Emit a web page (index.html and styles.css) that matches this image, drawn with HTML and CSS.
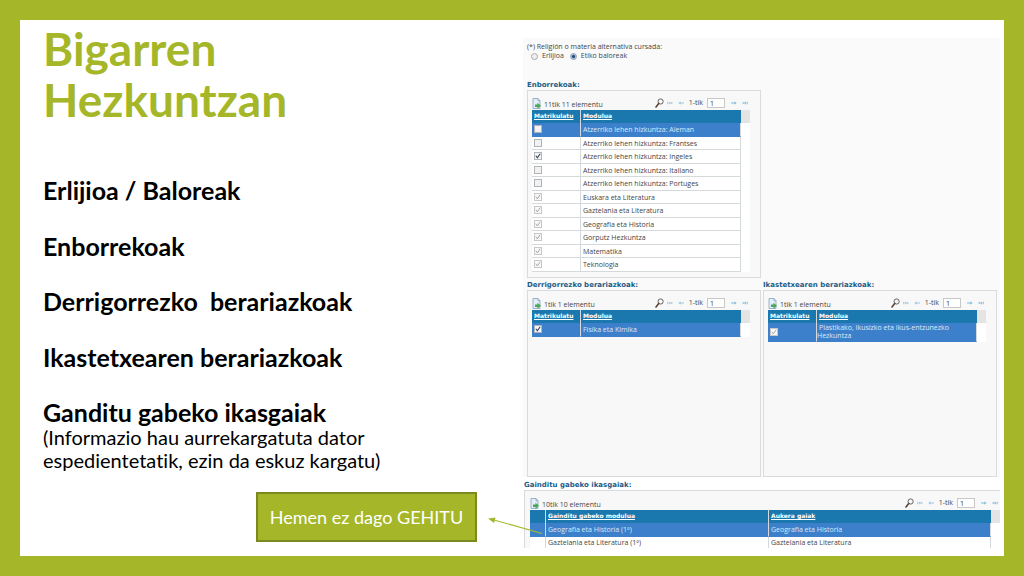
FILE: index.html
```
<!DOCTYPE html>
<html lang="eu">
<head>
    <meta charset="UTF-8">
    <meta name="viewport" content="width=device-width, initial-scale=1.0">
    <title>Bigarren Hezkuntzan</title>
    <link rel="stylesheet" href="styles.css">
</head>
<body>

<!-- shared icons -->
<svg class="sprite" aria-hidden="true">
    <symbol id="icon-export" viewBox="0 0 9 11">
        <path d="M1 .5h5l2 2.200v7.800H1z" fill="#e3eef8" stroke="#7da2c4" stroke-width=".8"/>
        <path d="M6 .5v2.300h2" fill="none" stroke="#7da2c4" stroke-width=".7"/>
        <path d="M3 6.500h2.500V4.800L9 7.700 5.500 10.700V9H3z" fill="#4fa556"/>
    </symbol>
    <symbol id="icon-search" viewBox="0 0 9 10">
        <circle cx="5.600" cy="3.500" r="2.600" fill="#f6f6f6" stroke="#555" stroke-width=".9"/>
        <path d="M3.700 5.500L1 9" stroke="#5b4636" stroke-width="1.600" stroke-linecap="round"/>
    </symbol>
    <symbol id="icon-first" viewBox="0 0 6 4">
        <path d="M.2.800h1v2.400h-1zM3.200.3v3.400L1.500 2zM3.500 1.200h2v1.600h-2z" fill="#a5cae0"/>
    </symbol>
    <symbol id="icon-prev" viewBox="0 0 6 4">
        <path d="M2.500.3v3.400L.3 2zM2.500 1.200h1.200v1.600H2.500zM4.200 1.200h1.500v1.600H4.200z" fill="#a5cae0"/>
    </symbol>
    <symbol id="icon-next" viewBox="0 0 6 4">
        <path d="M3.500.3v3.400L5.700 2zM2.300 1.200h1.200v1.600H2.300zM.3 1.200h1.500v1.600H.3z" fill="#8cc0dc"/>
    </symbol>
    <symbol id="icon-last" viewBox="0 0 6 4">
        <path d="M4.800.8h1v2.400h-1zM2.800.3v3.400L4.500 2zM.5 1.200h2v1.600h-2z" fill="#8cc0dc"/>
    </symbol>
</svg>

<main class="slide">
    <section class="summary">
        <h1>Bigarren Hezkuntzan</h1>
        <ul class="topics">
            <li>Erlijioa / Baloreak</li>
            <li>Enborrekoak</li>
            <li>Derrigorrezko&nbsp; berariazkoak</li>
            <li>Ikastetxearen berariazkoak</li>
            <li>Ganditu gabeko ikasgaiak</li>
        </ul>
        <p class="note">(Informazio hau aurrekargatuta dator espedientetatik, ezin da eskuz kargatu)</p>
        <div class="callout">
            Hemen ez dago GEHITU
            <svg class="arrow" viewBox="0 0 56 20" aria-hidden="true">
                <path d="M54 17.500L6 4" stroke="#a5b729" stroke-width="1.200"/>
                <path d="M0 2.500L7.500 1.500 6 7z" fill="#a5b729"/>
            </svg>
        </div>
    </section>

    <section class="app">
        <div class="app-top">
            <fieldset class="religion">
                <legend>(*) Religión o materia alternativa cursada:</legend>
                <label><input type="radio" name="religion">Erlijioa</label>
                <label><input type="radio" name="religion" checked>Etiko baloreak</label>
            </fieldset>

            <div class="panels">
                <div class="group">
                    <h2>Enborrekoak:</h2>
                    <div class="panel">
                        <div class="toolbar">
                            <svg class="export"><use href="#icon-export"/></svg>
                            <span class="count">11tik 11 elementu</span>
                            <svg class="search"><use href="#icon-search"/></svg>
                            <svg class="nav"><use href="#icon-first"/></svg>
                            <svg class="nav"><use href="#icon-prev"/></svg>
                            <label class="page">1-tik <input type="text" value="1"></label>
                            <svg class="nav"><use href="#icon-next"/></svg>
                            <svg class="nav"><use href="#icon-last"/></svg>
                        </div>
                        <div class="grid">
                            <table>
                                <thead>
                                    <tr><th class="check"><a href="#">Matrikulatu</a></th><th><a href="#">Modulua</a></th></tr>
                                </thead>
                                <tbody>
                                    <tr class="selected"><td><input type="checkbox" aria-label="Aleman"></td><td>Atzerriko lehen hizkuntza: Aleman</td></tr>
                                    <tr><td><input type="checkbox" aria-label="Frantses"></td><td>Atzerriko lehen hizkuntza: Frantses</td></tr>
                                    <tr><td><input type="checkbox" aria-label="Ingeles" checked></td><td>Atzerriko lehen hizkuntza: Ingeles</td></tr>
                                    <tr><td><input type="checkbox" aria-label="Italiano"></td><td>Atzerriko lehen hizkuntza: Italiano</td></tr>
                                    <tr><td><input type="checkbox" aria-label="Portuges"></td><td>Atzerriko lehen hizkuntza: Portuges</td></tr>
                                    <tr><td><input type="checkbox" aria-label="Euskara eta Literatura" checked disabled></td><td>Euskara eta Literatura</td></tr>
                                    <tr><td><input type="checkbox" aria-label="Gaztelania eta Literatura" checked disabled></td><td>Gaztelania eta Literatura</td></tr>
                                    <tr><td><input type="checkbox" aria-label="Geografia eta Historia" checked disabled></td><td>Geografia eta Historia</td></tr>
                                    <tr><td><input type="checkbox" aria-label="Gorputz Hezkuntza" checked disabled></td><td>Gorputz Hezkuntza</td></tr>
                                    <tr><td><input type="checkbox" aria-label="Matematika" checked disabled></td><td>Matematika</td></tr>
                                    <tr><td><input type="checkbox" aria-label="Teknologia" checked disabled></td><td>Teknologia</td></tr>
                                </tbody>
                            </table>
                        </div>
                    </div>
                </div>

                <div class="group second-row">
                    <h2>Derrigorrezko berariazkoak:</h2>
                    <div class="panel">
                        <div class="toolbar">
                            <svg class="export"><use href="#icon-export"/></svg>
                            <span class="count">1tik 1 elementu</span>
                            <svg class="search"><use href="#icon-search"/></svg>
                            <svg class="nav"><use href="#icon-first"/></svg>
                            <svg class="nav"><use href="#icon-prev"/></svg>
                            <label class="page">1-tik <input type="text" value="1"></label>
                            <svg class="nav"><use href="#icon-next"/></svg>
                            <svg class="nav"><use href="#icon-last"/></svg>
                        </div>
                        <div class="grid">
                            <table>
                                <thead>
                                    <tr><th class="check"><a href="#">Matrikulatu</a></th><th><a href="#">Modulua</a></th></tr>
                                </thead>
                                <tbody>
                                    <tr class="selected"><td><input type="checkbox" aria-label="Fisika eta Kimika" checked></td><td>Fisika eta Kimika</td></tr>
                                </tbody>
                            </table>
                        </div>
                    </div>
                </div>

                <div class="group second-row">
                    <h2>Ikastetxearen berariazkoak:</h2>
                    <div class="panel">
                        <div class="toolbar">
                            <svg class="export"><use href="#icon-export"/></svg>
                            <span class="count">1tik 1 elementu</span>
                            <svg class="search"><use href="#icon-search"/></svg>
                            <svg class="nav"><use href="#icon-first"/></svg>
                            <svg class="nav"><use href="#icon-prev"/></svg>
                            <label class="page">1-tik <input type="text" value="1"></label>
                            <svg class="nav"><use href="#icon-next"/></svg>
                            <svg class="nav"><use href="#icon-last"/></svg>
                        </div>
                        <div class="grid">
                            <table>
                                <thead>
                                    <tr><th class="check"><a href="#">Matrikulatu</a></th><th><a href="#">Modulua</a></th></tr>
                                </thead>
                                <tbody>
                                    <tr class="selected"><td><input type="checkbox" aria-label="Plastikako" checked disabled></td><td class="long">Plastikako, Ikusizko eta Ikus-entzunezko<br>Hezkuntza</td></tr>
                                </tbody>
                            </table>
                        </div>
                    </div>
                </div>
            </div>
        </div>

        <div class="group pending">
            <h2>Gainditu gabeko ikasgaiak:</h2>
            <div class="panel">
                <div class="toolbar">
                    <svg class="export"><use href="#icon-export"/></svg>
                    <span class="count">10tik 10 elementu</span>
                    <svg class="search"><use href="#icon-search"/></svg>
                    <svg class="nav"><use href="#icon-first"/></svg>
                    <svg class="nav"><use href="#icon-prev"/></svg>
                    <label class="page">1-tik <input type="text" value="1"></label>
                    <svg class="nav"><use href="#icon-next"/></svg>
                    <svg class="nav"><use href="#icon-last"/></svg>
                </div>
                <div class="grid">
                    <table>
                        <thead>
                            <tr><th class="mark"></th><th><a href="#">Gainditu gabeko modulua</a></th><th><a href="#">Aukera gaiak</a></th></tr>
                        </thead>
                        <tbody>
                            <tr class="selected"><td></td><td>Geografia eta Historia (1º)</td><td>Geografia eta Historia</td></tr>
                            <tr><td></td><td>Gaztelania eta Literatura (1º)</td><td>Gaztelania eta Literatura</td></tr>
                        </tbody>
                    </table>
                </div>
            </div>
        </div>
    </section>
</main>

</body>
</html>
```
FILE: styles.css
```
* {
    box-sizing: border-box;
}
body {
    margin: 0;
    background: #fff;
    color: #000;
    font-family: Lato, "Open Sans", sans-serif;
    font-variant-ligatures: none;
}
.sprite {
    display: none;
}
.slide {
    display: grid;
    grid-template-columns: 500fr 484fr;
    min-height: 100vh;
    border: 20px solid #a5b729;
}

/* left side */
.summary {
    padding: 3px 0 0 23px;
}
h1 {
    max-width: 300px;
    margin: 0 0 37px;
    color: #a5b729;
    font-size: 46px;
    line-height: 51px;
}
.topics {
    margin: 0;
    padding: 0;
    list-style: none;
    font-size: 25px;
    font-weight: bold;
    line-height: 28px;
}
.topics li {
    padding-top: 14px;
    padding-bottom: 13px;
}
.topics li:nth-child(odd) {
    padding-bottom: 14px;
}
.topics li:last-child {
    padding-bottom: 0;
}
.note {
    max-width: 370px;
    margin: 0;
    font-size: 20px;
    line-height: 23px;
}
.callout {
    position: relative;
    display: flex;
    align-items: center;
    justify-content: center;
    width: 221px;
    height: 50px;
    margin: 20px 0 0 213px;
    border: 2px solid #7b8a1f;
    background: #a5b729;
    color: #fff;
    font-size: 18px;
}
.arrow {
    position: absolute;
    top: 22px;
    left: 230px;
    width: 56px;
    height: 20px;
}

/* right side */
.app {
    padding: 18px 4px 8px 3px;
    color: #444;
    font-family: "Open Sans", sans-serif;
    font-size: 7px;
    line-height: 8px;
}
.app-top {
    padding: 5px 3px 0 4px;
    background: #fafafa;
}
.religion {
    margin: 0 0 19px;
    padding: 0;
    border: 0;
}
.religion legend {
    padding: 0;
}
.religion label {
    display: inline-flex;
    align-items: center;
    gap: 4px;
    height: 10px;
    margin-left: 4px;
}
input {
    margin: 0;
    font: inherit;
}
input[type="radio"] {
    width: 7px;
    height: 7px;
    appearance: none;
    border: 1px solid #aaa;
    border-radius: 50%;
    background: #eee;
}
input[type="radio"]:checked {
    border-color: #8d9eb0;
    background: radial-gradient(circle, #1c4f7c 30%, #dbe6ef 70%);
}
.panels {
    display: grid;
    grid-template-columns: 1fr 1fr;
    column-gap: 2px;
    row-gap: 3px;
}
.group:first-child {
    grid-row: 1;
}
.second-row {
    grid-row: 2;
}
h2 {
    margin: 0;
    color: #1d5c88;
    font-family: "DejaVu Sans", sans-serif;
    font-size: 7px;
    line-height: 9px;
}
.panel {
    padding: 6px 10px 5px 4px;
    border: 1px solid #d8dcdc;
    background: #f8f8f8;
}
.second-row .panel {
    height: 187px;
}
.toolbar {
    display: flex;
    align-items: center;
    height: 13px;
    padding-right: 2px;
}
.toolbar .export {
    width: 9px;
    height: 11px;
}
.toolbar .count {
    margin: 4px auto 0 3px;
}
.toolbar .search {
    width: 9px;
    height: 10px;
    margin-right: 3px;
}
.toolbar .nav {
    width: 6px;
    height: 4px;
    margin-right: 5px;
}
.toolbar .nav:last-child {
    margin-right: 0;
}
.page {
    display: flex;
    align-items: center;
    gap: 4px;
    margin-right: 6px;
}
.page input {
    width: 18px;
    height: 10px;
    padding: 0 2px;
    border: 1px solid #c8c8c8;
    background: #fff;
    color: #333;
}
.grid {
    padding-right: 9px;
    background: linear-gradient(#e4e4e4 13px, #fff 13px);
}
table {
    width: 100%;
    border-collapse: separate;
    border-spacing: 0;
    table-layout: fixed;
    background: #fff;
}
th {
    height: 13px;
    padding: 0 2px;
    background: #1a78ae;
    font-family: "DejaVu Sans", sans-serif;
    font-size: 6px;
    text-align: left;
}
th a {
    color: #fff;
}
th.check {
    width: 48px;
}
th.mark {
    width: 15px;
}
td {
    height: 13px;
    padding: 0 2px;
    border-bottom: 1px solid #d4d9dc;
}
tr:nth-child(odd) td {
    height: 14px;
}
th + th,
td + td {
    border-left: 1px solid #d4d9dc;
}
td + td {
    padding-top: 2px;
}
td:last-child {
    border-right: 1px solid #d4d9dc;
}
.selected td {
    border-bottom-color: #3c80cb;
    background: #3c80cb;
    color: #dce9f7;
}
td.long {
    padding: 1px 0;
    text-indent: 2px;
}
input[type="checkbox"] {
    display: block;
    width: 8px;
    height: 8px;
    appearance: none;
    border: 1px solid #b0b4b8;
    background: #f2f2f2;
}
input[type="checkbox"]:checked {
    background: #f4f6f8 url("data:image/svg+xml,%3Csvg xmlns='http://www.w3.org/2000/svg' viewBox='0 0 5 5'%3E%3Cpath d='M.7 2.300L2 4.100 4.300.6' fill='none' stroke='%23345' stroke-width='.9'/%3E%3C/svg%3E") center / 6px 6px no-repeat;
}
input[type="checkbox"]:checked:disabled {
    border-color: #c8c8c8;
    background: #f8f8f8 url("data:image/svg+xml,%3Csvg xmlns='http://www.w3.org/2000/svg' viewBox='0 0 5 5'%3E%3Cpath d='M.7 2.300L2 4.100 4.300.6' fill='none' stroke='%23999' stroke-width='.7'/%3E%3C/svg%3E") center / 6px 6px no-repeat;
}

/* list at the bottom runs to the edge of the slide */
.pending {
    padding: 4px 0 0 1px;
}
.pending .panel {
    padding: 6px 0 0 5px;
    border-right: 0;
    border-bottom: 0;
}
.pending tbody tr:last-child td {
    height: 11px;
    border-bottom: 0;
}
```
